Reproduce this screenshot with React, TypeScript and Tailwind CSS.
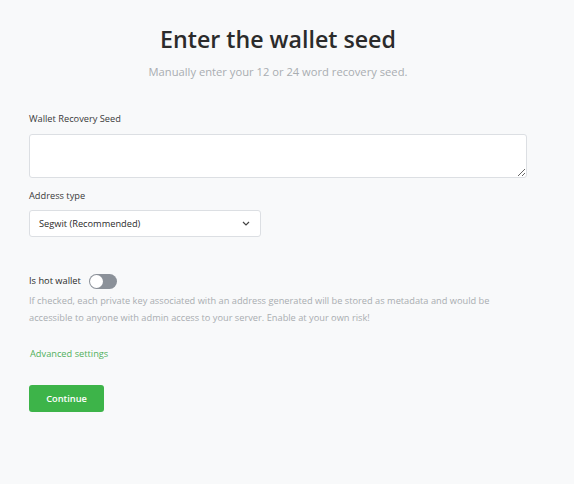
import React from "react";

export default function App() {
  return (
    <div
      className="min-h-[484px] w-[574px] bg-[#f8f9fa] text-[#292929]"
      style={{ fontFamily: '"Open Sans", "Liberation Sans", sans-serif' }}
    >
      <div className="ml-[29px] w-[498px] flex flex-col pb-[72px]">
        <h1 className="mt-[23px] text-center text-[23.2px] leading-[32px] font-semibold text-[#2b2b2b]">
          Enter the wallet seed
        </h1>
        <p className="mt-[9px] text-center text-[11.2px] leading-[16px] text-[#a9adb1]">
          Manually enter your 12 or 24 word recovery seed.
        </p>

        <label className="mt-[32px] text-[9.25px] leading-[14px] text-[#3a3a3a]">
          Wallet Recovery Seed
        </label>
        <textarea className="mt-[8px] h-[44px] w-[498px] rounded-[3px] border border-[#dcdfe3] bg-white outline-none" />

        <label className="mt-[11px] text-[9.25px] leading-[14px] text-[#3a3a3a]">
          Address type
        </label>
        <div className="mt-[7px] flex h-[27px] w-[232px] items-center justify-between rounded-[3px] border border-[#dcdfe3] bg-white pl-[9px] pr-[10px]">
          <span className="text-[9.25px] leading-[14px] text-[#2b2b2b]">Segwit (Recommended)</span>
          <svg width="8" height="5" viewBox="0 0 8 5" fill="none">
            <path d="M1 1l3 3 3-3" stroke="#444" strokeWidth="1.2" />
          </svg>
        </div>

        <div className="mt-[36px] flex h-[16px] items-center">
          <span className="text-[9.25px] leading-[14px] text-[#2b2b2b]">Is hot wallet</span>
          <div className="ml-[8px] flex h-[15px] w-[28px] items-center rounded-full bg-[#8b9199] p-[1px]">
            <div className="h-[13px] w-[13px] rounded-full bg-white" />
          </div>
        </div>
        <p className="mt-[3px] text-[9.25px] leading-[17px] text-[#a9adb1]">
          If checked, each private key associated with an address generated will be stored as metadata and would be
          <br />
          accessible to anyone with admin access to your server. Enable at your own risk!
        </p>

        <a className="mt-[21px] ml-[1px] text-[9.25px] leading-[14px] text-[#51b05b]">Advanced settings</a>

        <button className="mt-[24px] h-[27px] w-[75px] rounded-[3px] bg-[#3db449] text-[9.25px] font-semibold text-white">
          Continue
        </button>
      </div>
    </div>
  );
}
